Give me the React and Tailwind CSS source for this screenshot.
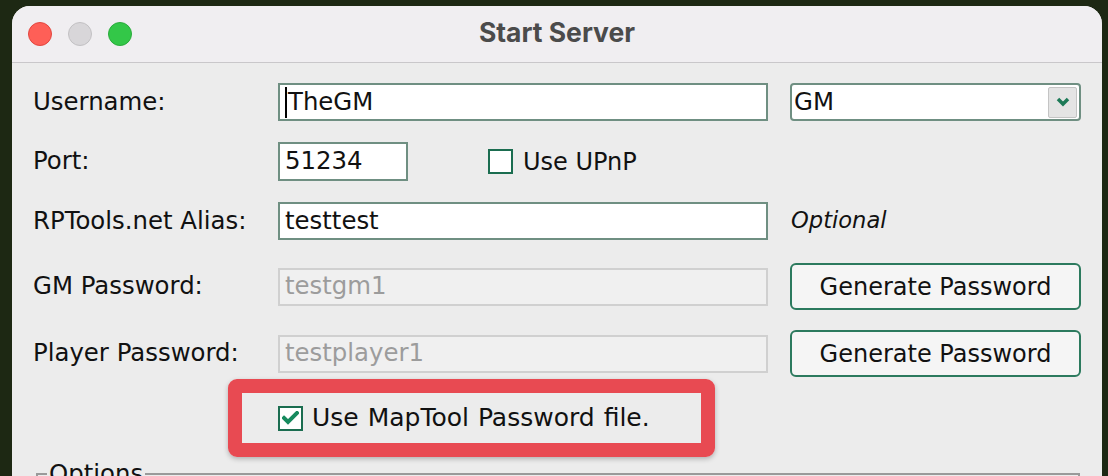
import React from 'react';

const Check = ({ checked }) => (
  <span className="w-[25px] h-[25px] border-2 border-[#1b6d50] bg-white flex items-center justify-center shrink-0">
    {checked && (
      <svg width="17" height="15" viewBox="0 0 17 15">
        <path d="M2 7 L6 11 L15 2" fill="none" stroke="#178a5e" strokeWidth="4" strokeLinecap="square" />
      </svg>
    )}
  </span>
);

const GenButton = () => (
  <button className="w-[291px] h-[47px] border-2 border-[#2c7a5e] rounded-[6px] bg-[#f5f5f5] text-[24px] text-[#111] font-[family-name:DejaVu_Sans,sans-serif]">
    Generate Password
  </button>
);

const App = () => {
  return (
    <div className="w-[1108px] h-[476px] bg-[#1d2813] pt-[6px] pl-[12px] overflow-hidden font-[family-name:DejaVu_Sans,sans-serif]">
      <div className="w-[1090px] h-[480px] bg-[#ececec] rounded-t-[18px] overflow-hidden flex flex-col">
        {/* title bar */}
        <div className="h-[57px] shrink-0 bg-[#f0eef1] border-b border-[#c9c7ca] relative flex items-center justify-center">
          <div className="absolute left-[16px] top-[16px] flex gap-[16px]">
            <span className="w-[24px] h-[24px] rounded-full bg-[#fe5f57] border border-[#e2463f]" />
            <span className="w-[24px] h-[24px] rounded-full bg-[#d8d6d9] border border-[#c2c0c3]" />
            <span className="w-[24px] h-[24px] rounded-full bg-[#33c748] border border-[#2aab3c]" />
          </div>
          <span className="font-[family-name:Inter,sans-serif] font-bold text-[26.5px] text-[#4b4b4b] mt-[-2px]">Start Server</span>
        </div>

        {/* form */}
        <div className="pl-[21px] pt-[20px] flex flex-col text-[24.4px] text-[#111]">
          {/* Username */}
          <div className="flex items-center h-[38px]">
            <span className="w-[245px] shrink-0">Username:</span>
            <div className="w-[490px] h-[38px] border-2 border-[#6f8f82] bg-white flex items-center pl-[5px]">
              <span className="inline-block w-[2px] h-[31px] bg-black mr-[1px]" />
              <span>TheGM</span>
            </div>
            <div className="ml-[22px] w-[291px] h-[38px] border-2 border-[#6f8f82] rounded-[4px] bg-white flex items-center justify-between pl-[2px] pr-[2px]">
              <span>GM</span>
              <span className="w-[29px] h-[31px] bg-[#e4e4e4] border border-[#c4c4c4] rounded-[2px] flex items-center justify-center">
                <svg width="14" height="10" viewBox="0 0 14 10">
                  <path d="M2 2 L7 7 L12 2" fill="none" stroke="#1d7a57" strokeWidth="3.5" />
                </svg>
              </span>
            </div>
          </div>

          {/* Port */}
          <div className="flex items-center h-[39px] mt-[21px]">
            <span className="w-[245px] shrink-0">Port:</span>
            <div className="w-[130px] h-[39px] border-2 border-[#6f8f82] bg-white flex items-center pl-[5px]">51234</div>
            <div className="ml-[80px] flex items-center gap-[10px]">
              <Check />
              <span className="text-[24px]">Use UPnP</span>
            </div>
          </div>

          {/* RPTools alias */}
          <div className="flex items-center h-[38px] mt-[21px]">
            <span className="w-[245px] shrink-0">RPTools.net Alias:</span>
            <div className="w-[490px] h-[38px] border-2 border-[#6f8f82] bg-white flex items-center pl-[5px]">testtest</div>
            <span className="ml-[23px] italic text-[22.6px]">Optional</span>
          </div>

          {/* GM password */}
          <div className="flex items-center h-[47px] mt-[23px]">
            <span className="w-[245px] shrink-0">GM Password:</span>
            <div className="w-[490px] h-[38px] border-2 border-[#d0d0d0] bg-[#f0f0f0] text-[#9c9c9c] flex items-center pl-[5px]">testgm1</div>
            <div className="ml-[22px]">
              <GenButton />
            </div>
          </div>

          {/* Player password */}
          <div className="flex items-center h-[47px] mt-[20px]">
            <span className="w-[245px] shrink-0">Player Password:</span>
            <div className="w-[490px] h-[38px] border-2 border-[#d0d0d0] bg-[#f0f0f0] text-[#9c9c9c] flex items-center pl-[5px]">testplayer1</div>
            <div className="ml-[22px]">
              <GenButton />
            </div>
          </div>

          {/* password file (highlighted) */}
          <div className="ml-[195px] mt-[2px] w-[487px] h-[78px] border-[14px] border-[#e84a52] rounded-[9px] shadow-[0_2px_5px_rgba(0,0,0,0.25)] flex items-center pl-[36px] gap-[9px]">
            <Check checked />
            <span className="text-[25px] [word-spacing:1px]">Use MapTool Password file.</span>
          </div>

          {/* options */}
          <fieldset className="ml-[3px] mr-[22px] mt-[2px] border-2 border-[#9a9a9a] pl-[9px] h-[60px]">
            <legend className="px-[2px] leading-[30px]">Options</legend>
          </fieldset>
        </div>
      </div>
    </div>
  );
};

export default App;
